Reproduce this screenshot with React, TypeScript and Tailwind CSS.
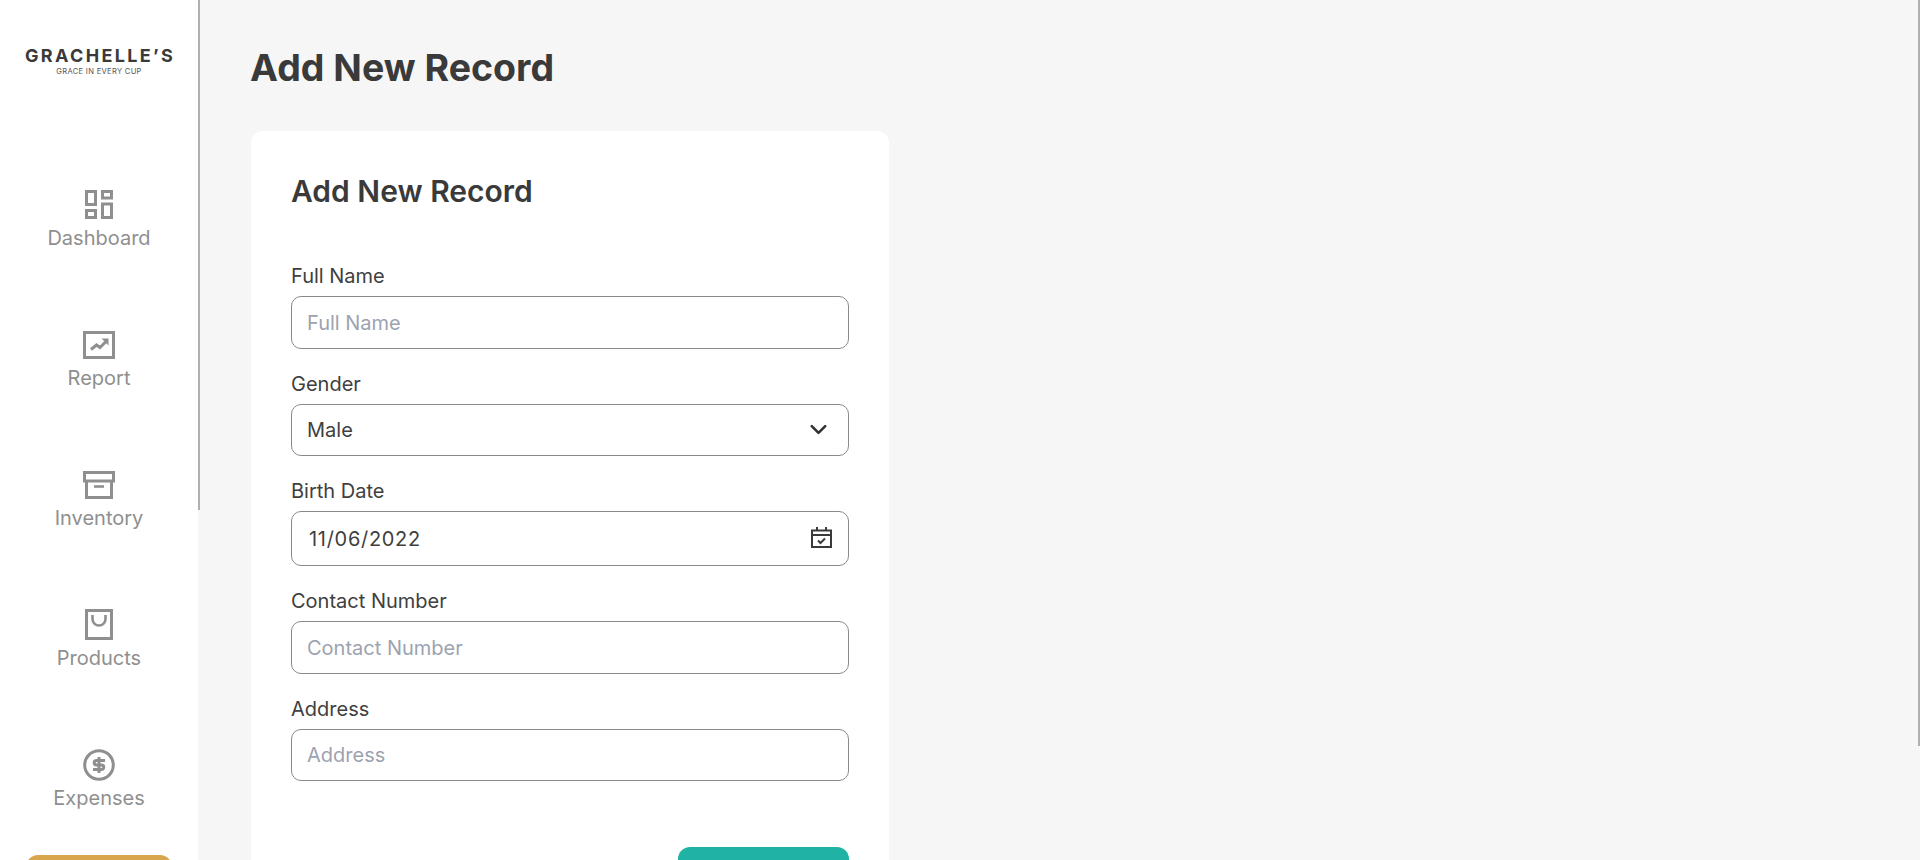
import React from 'react'
import { ChevronDown } from 'lucide-react'

const DashboardIcon = () => (
    <svg width="28" height="29" viewBox="0 0 28 29" fill="none" stroke="#8f8f8f" strokeWidth="3">
        <rect x="1.5" y="1.5" width="9" height="13" />
        <rect x="17.5" y="1.5" width="9" height="6.5" />
        <rect x="1.5" y="20.5" width="9" height="7" />
        <rect x="17.5" y="14" width="9" height="13.5" />
    </svg>
)

const ReportIcon = () => (
    <svg width="32" height="28" viewBox="0 0 32 28" fill="none" stroke="#8f8f8f">
        <rect x="1.5" y="1.5" width="29" height="25" strokeWidth="3" />
        <path d="M8 18.5l5.5-4.5 3.5 2.5 6-6" strokeWidth="3" />
        <path d="M18.5 7.5H25.5V14.5z" fill="#8f8f8f" stroke="none" />
    </svg>
)

const InventoryIcon = () => (
    <svg width="32" height="28" viewBox="0 0 32 28" fill="none" stroke="#8f8f8f" strokeWidth="3">
        <rect x="1.5" y="1.5" width="29" height="8.5" />
        <path d="M3.5 10v16.5h25V10" />
        <path d="M11 15.5h10" strokeWidth="2.6" />
    </svg>
)

const ProductsIcon = () => (
    <svg width="28" height="31" viewBox="0 0 28 31" fill="none" stroke="#8f8f8f" strokeWidth="3">
        <rect x="1.5" y="1.5" width="25" height="28" />
        <path d="M7.5 6v4a6.5 6.5 0 0 0 13 0V6" strokeWidth="2.6" />
    </svg>
)

const ExpensesIcon = () => (
    <svg width="32" height="32" viewBox="0 0 32 32" fill="none" stroke="#8f8f8f">
        <circle cx="16" cy="16" r="14.3" strokeWidth="3" />
        <path d="M22 11.5h-8.5a2.2 2.2 0 0 0 0 4.5h5a2.2 2.2 0 0 1 0 4.5H10M16 8v16" strokeWidth="3" />
    </svg>
)

const CalendarIcon = () => (
    <svg width="21" height="21" viewBox="0 0 21 21" fill="none" stroke="#3a3a3a">
        <rect x="1" y="3.5" width="19" height="16.5" strokeWidth="2" />
        <path d="M1 8h19M6 0v4M15 0v4" strokeWidth="2" />
        <path d="M7 13.5l2.5 2.5 4.5-4.5" strokeWidth="2" />
    </svg>
)

const navItems = [
    { label: 'Dashboard', icon: <DashboardIcon /> },
    { label: 'Report', icon: <ReportIcon /> },
    { label: 'Inventory', icon: <InventoryIcon /> },
    { label: 'Products', icon: <ProductsIcon /> },
    { label: 'Expenses', icon: <ExpensesIcon /> },
]

const Sidebar = () => (
    <aside className="relative w-[200px] h-full shrink-0 overflow-hidden">
        <div className="w-[198px] flex flex-col items-center bg-white min-h-full">
            <div className="pt-[47px] flex flex-col items-center text-[#3a3a3a]">
                <span className="text-[18px] leading-[18px] font-bold tracking-[0.13em] pl-[2px]">GRACHELLE’S</span>
                <span className="text-[7.6px] leading-[13px] tracking-[0.04em] text-[#555555]">GRACE IN EVERY CUP</span>
            </div>
            <nav className="mt-[110px] flex flex-col gap-[76px] shrink-0">
                {navItems.map((item) => (
                    <div key={item.label} className="h-[64px] flex flex-col items-center text-[#8f8f8f]">
                        <div className="h-[33px] shrink-0 flex items-center justify-center">{item.icon}</div>
                        <span className="mt-[3px] text-[20px] leading-[28px]">{item.label}</span>
                    </div>
                ))}
            </nav>
            <div className="mt-[43px] w-[146px] h-[50px] shrink-0 rounded-[12px] bg-[#d8a64c]" />
        </div>
        <div className="absolute top-0 right-0 w-[2px] h-[510px] bg-[#b0b0b0]" />
    </aside>
)

const fieldClass = 'w-full border border-[#8a8a8a] rounded-[10px] px-[15px] text-[20px] text-[#404040] bg-white outline-none placeholder:text-[#9ca3af]'

const Field = ({ label, height, children }: { label: string; height: string; children: React.ReactNode }) => (
    <div className="flex flex-col">
        <label className="text-[20px] leading-[28px] text-[#404040]">{label}</label>
        <div className={`relative mt-[6px] ${height}`}>{children}</div>
    </div>
)

const App = () => {
    return (
        <div className="relative flex w-full h-screen overflow-hidden bg-[#f6f6f6] font-['Inter',sans-serif]">
            <Sidebar />
            <main className="flex-1 pl-[50px] pt-[44px] min-w-0">
                <h1 className="text-[37.5px] leading-[48px] font-bold text-[#3a3a3a]">Add New Record</h1>
                <section className="mt-[39px] ml-[1px] w-[638px] bg-white rounded-[12px] p-[40px] pb-[60px]">
                    <h2 className="text-[30px] leading-[40px] font-semibold text-[#3a3a3a]">Add New Record</h2>
                    <form className="mt-[51px] flex flex-col gap-[21px]">
                        <Field label="Full Name" height="h-[53px]">
                            <input className={`${fieldClass} h-full`} placeholder="Full Name" />
                        </Field>
                        <Field label="Gender" height="h-[52px]">
                            <select className={`${fieldClass} h-full appearance-none`} defaultValue="Male">
                                <option>Male</option>
                                <option>Female</option>
                            </select>
                            <ChevronDown className="absolute right-[17px] top-[12px] w-[27px] h-[27px] text-[#333333] pointer-events-none" strokeWidth={2.3} />
                        </Field>
                        <Field label="Birth Date" height="h-[55px]">
                            <input className={`${fieldClass} h-full pl-[17px] tracking-[0.035em]`} defaultValue="11/06/2022" />
                            <div className="absolute right-[17px] top-[16px]"><CalendarIcon /></div>
                        </Field>
                        <Field label="Contact Number" height="h-[53px]">
                            <input className={`${fieldClass} h-full`} placeholder="Contact Number" />
                        </Field>
                        <Field label="Address" height="h-[52px]">
                            <input className={`${fieldClass} h-full`} placeholder="Address" />
                        </Field>
                    </form>
                    <div className="mt-[66px] flex justify-end">
                        <button type="button" className="w-[171px] h-[50px] rounded-[12px] bg-[#20b2a4]" />
                    </div>
                </section>
            </main>
            <div className="absolute top-0 right-0 w-[2px] h-[746px] bg-[#b0b0b0]" />
        </div>
    )
}

export default App
